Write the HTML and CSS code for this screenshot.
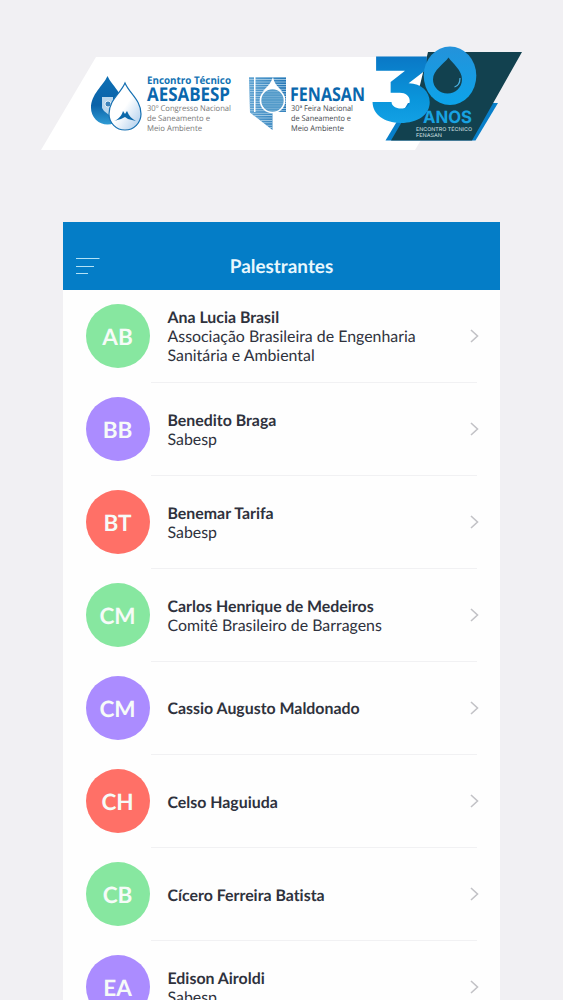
FILE: index.html
```html
<!DOCTYPE html>
<html lang="pt-BR">
<head>
  <meta charset="utf-8">
  <title>Palestrantes</title>
  <link rel="stylesheet" href="styles.css">
</head>
<body>
  <svg class="banner" viewBox="0 0 563 222" width="563" height="222">
    <defs>
      <linearGradient id="dropDark" x1="0" y1="0" x2="0" y2="1">
        <stop offset="0" stop-color="#0d6fb4"/>
        <stop offset="0.6" stop-color="#0a62a8"/>
        <stop offset="1" stop-color="#2f9bd4"/>
      </linearGradient>
      <linearGradient id="dropLight" x1="0" y1="0" x2="1" y2="1">
        <stop offset="0.5" stop-color="#ffffff"/>
        <stop offset="1" stop-color="#a5c8ea"/>
      </linearGradient>
      <linearGradient id="three" x1="0" y1="0" x2="0" y2="1">
        <stop offset="0.2" stop-color="#0a78c6"/>
        <stop offset="0.6" stop-color="#0a96dc"/>
        <stop offset="0.9" stop-color="#16a5e8"/>
      </linearGradient>
      <linearGradient id="zero" x1="0" y1="0" x2="0" y2="1">
        <stop offset="0" stop-color="#2492da"/>
        <stop offset="1" stop-color="#0ca4ea"/>
      </linearGradient>
      <linearGradient id="fenasan" x1="0" y1="0" x2="1" y2="0">
        <stop offset="0" stop-color="#5fa3d2"/>
        <stop offset="1" stop-color="#2577b6"/>
      </linearGradient>
      <pattern id="gaps" width="4" height="2.4" patternUnits="userSpaceOnUse">
        <rect width="4" height="0.8" fill="#a9cee6"/>
      </pattern>
    </defs>

    <path fill="#fff" d="M96 57H470L415 150H41Z"/>

    <!-- Aesabesp -->
    <path fill="url(#dropDark)" d="M107.500 76C103 86 91 94 91 108A16.500 16.500 0 0 0 124 108C124 94 112 86 107.500 76Z"/>
    <path fill="#b9d6ec" d="M102 97h11v6l-4 12-5-4-2-3z"/>
    <circle cx="108" cy="104" r="3" fill="#3d83bb" stroke="#fff" stroke-width="0.800"/>
    <path fill="url(#dropLight)" stroke="#1670b2" stroke-width="1.200" d="M125 83C121 93 109 100 109 114A16 16 0 0 0 141 114C141 100 129 93 125 83Z"/>
    <path fill="#0b68aa" d="M114 121C119 119 122 115 123 111L125 114L127 111C129 116 132 119 136 121L128 119L125 117L121 119Z"/>
    <text class="logo-top" x="147" y="84" textLength="84" lengthAdjust="spacingAndGlyphs">Encontro Técnico</text>
    <text class="logo-name" x="147" y="100.500" textLength="83" lengthAdjust="spacingAndGlyphs">AESABESP</text>
    <text class="logo-sub light" x="147" y="111" textLength="84" lengthAdjust="spacingAndGlyphs">30º Congresso Nacional</text>
    <text class="logo-sub light" x="147" y="121" textLength="63" lengthAdjust="spacingAndGlyphs">de Saneamento e</text>
    <text class="logo-sub light" x="147" y="130.500" textLength="55" lengthAdjust="spacingAndGlyphs">Meio Ambiente</text>

    <!-- Fenasan -->
    <path fill="url(#fenasan)" d="M249 77H286V112H272.500V130L250 112.500Z"/>
    <path fill="url(#gaps)" d="M249 77H286V112H272.500V130L250 112.500Z"/>
    <path fill="#fff" d="M254 77h1.500v35h-1.500zM273 77C274 83 277 86 282 91L273 90L263 91C268 86 271 83 273 77Z"/>
    <circle cx="272.500" cy="100.500" r="12" fill="#549bca" stroke="#fff" stroke-width="1.700"/>
    <circle cx="272.500" cy="100.500" r="11" fill="url(#gaps)" opacity="0.400"/>
    <text class="logo-name" x="290" y="101" textLength="75" lengthAdjust="spacingAndGlyphs">FENASAN</text>
    <text class="logo-sub" x="291" y="111" textLength="62" lengthAdjust="spacingAndGlyphs">30ª Feira Nacional</text>
    <text class="logo-sub" x="291" y="121" textLength="60" lengthAdjust="spacingAndGlyphs">de Saneamento e</text>
    <text class="logo-sub" x="291" y="130.500" textLength="53" lengthAdjust="spacingAndGlyphs">Meio Ambiente</text>

    <!-- 30 anos -->
    <path fill="#087fc9" d="M385.500 140.500L408 103H498L475.500 140.500Z"/>
    <path fill="#12414f" d="M428 52H522L472 140.500H391L403 120L420 85Z"/>
    <text class="three" x="369" y="122" textLength="64" lengthAdjust="spacingAndGlyphs">3</text>
    <ellipse cx="450" cy="75.800" rx="26.300" ry="29.300" fill="url(#zero)"/>
    <path fill="#12414f" d="M448.500 57.500C444 64 433 70 433 79.500A14.500 14 0 0 0 462 79.500C462 70 453 64 448.500 57.500Z"/>
    <path fill="none" stroke="#4db4e4" stroke-width="1.200" d="M460 78C460 83 458 86 454.500 87"/>
    <text class="anos" x="423" y="122.500" textLength="49" lengthAdjust="spacingAndGlyphs">ANOS</text>
    <text class="anos-sub" x="416" y="130.500" textLength="56" lengthAdjust="spacingAndGlyphs">ENCONTRO TÉCNICO</text>
    <text class="anos-sub" x="416" y="136.800" textLength="26" lengthAdjust="spacingAndGlyphs">FENASAN</text>
  </svg>

  <div class="app">
    <header class="topbar">
      <svg class="menu" width="24" height="18" viewBox="0 0 24 18">
        <path d="M0 1.500H23.500M0 9.500H18M0 16.500H12"/>
      </svg>
      <h1>Palestrantes</h1>
    </header>
    <ul class="speakers">
      <li class="speaker">
        <span class="avatar green">AB</span>
        <div class="info"><b>Ana Lucia Brasil</b><span>Associação Brasileira de Engenharia Sanitária e Ambiental</span></div>
        <svg class="arrow" viewBox="0 0 9 14"><path d="M1 1L7.500 7L1 13"/></svg>
      </li>
      <li class="speaker">
        <span class="avatar purple">BB</span>
        <div class="info"><b>Benedito Braga</b><span>Sabesp</span></div>
        <svg class="arrow" viewBox="0 0 9 14"><path d="M1 1L7.500 7L1 13"/></svg>
      </li>
      <li class="speaker">
        <span class="avatar red">BT</span>
        <div class="info"><b>Benemar Tarifa</b><span>Sabesp</span></div>
        <svg class="arrow" viewBox="0 0 9 14"><path d="M1 1L7.500 7L1 13"/></svg>
      </li>
      <li class="speaker">
        <span class="avatar green">CM</span>
        <div class="info"><b>Carlos Henrique de Medeiros</b><span>Comitê Brasileiro de Barragens</span></div>
        <svg class="arrow" viewBox="0 0 9 14"><path d="M1 1L7.500 7L1 13"/></svg>
      </li>
      <li class="speaker">
        <span class="avatar purple">CM</span>
        <div class="info"><b>Cassio Augusto Maldonado</b></div>
        <svg class="arrow" viewBox="0 0 9 14"><path d="M1 1L7.500 7L1 13"/></svg>
      </li>
      <li class="speaker">
        <span class="avatar red">CH</span>
        <div class="info"><b>Celso Haguiuda</b></div>
        <svg class="arrow" viewBox="0 0 9 14"><path d="M1 1L7.500 7L1 13"/></svg>
      </li>
      <li class="speaker">
        <span class="avatar green">CB</span>
        <div class="info"><b>Cícero Ferreira Batista</b></div>
        <svg class="arrow" viewBox="0 0 9 14"><path d="M1 1L7.500 7L1 13"/></svg>
      </li>
      <li class="speaker">
        <span class="avatar purple">EA</span>
        <div class="info"><b>Edison Airoldi</b><span>Sabesp</span></div>
        <svg class="arrow" viewBox="0 0 9 14"><path d="M1 1L7.500 7L1 13"/></svg>
      </li>
    </ul>
  </div>
</body>
</html>
```
FILE: styles.css
```css
* {
  box-sizing: border-box;
}
body {
  margin: 0;
  height: 1000px;
  overflow: hidden;
  background: #f1f0f3;
  font-family: Lato, "Liberation Sans", sans-serif;
  font-variant-ligatures: none;
  color: #2f323d;
  text-rendering: geometricPrecision;
}
.banner {
  display: block;
}
.logo-top {
  font: 700 10.5px "Open Sans", sans-serif;
  fill: #1272b3;
}
.logo-name {
  font: 700 19px "Open Sans", sans-serif;
  fill: #0a67ad;
}
.logo-sub {
  font: 400 8px "Open Sans", sans-serif;
  fill: #44484d;
}
.logo-sub.light {
  fill: #777;
}
.three {
  font: 900 90px Inter, sans-serif;
  font-feature-settings: "cv09";
  fill: url(#three);
}
.anos {
  font: 700 17px Inter, sans-serif;
  fill: #18a3e2;
}
.anos-sub {
  font: 400 5.2px Inter, sans-serif;
  fill: #d5e2e6;
}
.app {
  width: 437px;
  margin-left: 63px;
  background: #fefefe;
}
.topbar {
  display: grid;
  grid-template-columns: 24px 1fr 24px;
  align-items: center;
  height: 67.5px;
  padding: 20px 13px 0;
  background: #047dc7;
}
.topbar h1 {
  margin: 0;
  padding-top: 2px;
  font-size: 18.9px;
  font-weight: 700;
  line-height: 24px;
  text-align: center;
  color: #e9f7fd;
}
.menu path {
  stroke: #b4e2f6;
  stroke-width: 1;
}
.speakers {
  margin: 0;
  padding: 0;
  list-style: none;
}
.speaker {
  display: flex;
  align-items: center;
  height: 93.1px;
  padding: 0 21px 1px 22.5px;
  background: linear-gradient(#f1f1f3, #f1f1f3) 88px 100% / 326px 1px no-repeat;
}
.avatar {
  flex: none;
  width: 64px;
  height: 64px;
  margin-right: 18px;
  border-radius: 50%;
  font-size: 22.5px;
  font-weight: 700;
  line-height: 65px;
  text-align: center;
  color: #f6fbf8;
}
.green {
  background: #87e7a0;
}
.purple {
  background: #ab8cff;
}
.red {
  background: #ff7067;
}
.info {
  width: 262px;
  padding-top: 2px;
  font-size: 15.9px;
  line-height: 19px;
}
.info b,
.info span {
  display: block;
}
.arrow {
  width: 9px;
  height: 14px;
  margin-left: auto;
}
.arrow path {
  fill: none;
  stroke: #c2c2c6;
  stroke-width: 1.6;
}
```
